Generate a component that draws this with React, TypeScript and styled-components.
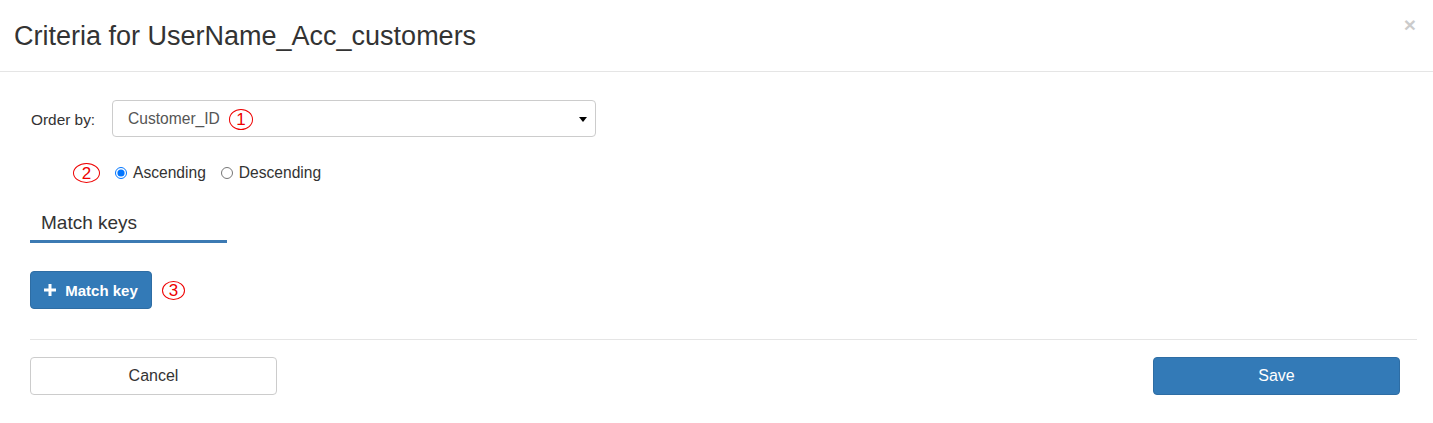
import React from "react";
import styled, { createGlobalStyle } from "styled-components";

const Global = createGlobalStyle`
  html, body { margin: 0; padding: 0; background: #fff; }
  body { font-family: "Liberation Sans", Arial, sans-serif; color: #333; }
  * { box-sizing: border-box; }
`;

const Modal = styled.div`
  width: 1433px;
  height: 423px;
  background: #fff;
  display: flex;
  flex-direction: column;
`;

const Header = styled.div`
  height: 72px;
  border-bottom: 1px solid #e5e5e5;
  display: flex;
  align-items: flex-start;
  justify-content: space-between;
  padding: 0 17px 0 14px;
`;

const Title = styled.h4`
  margin: 0;
  padding-top: 20px;
  font-size: 27px;
  line-height: 32px;
  font-weight: normal;
  color: #333;
`;

const Close = styled.button`
  border: 0;
  background: none;
  padding: 0;
  margin-top: 13px;
  font-family: "Liberation Sans", Arial, sans-serif;
  font-size: 21px;
  font-weight: bold;
  line-height: 24px;
  color: #000;
  opacity: 0.2;
`;

const Body = styled.div`
  padding: 28px 16px 0 30px;
  display: flex;
  flex-direction: column;
`;

const FieldRow = styled.div`
  display: flex;
  align-items: center;
  height: 37px;
`;

const Label = styled.label`
  width: 82px;
  padding-left: 1px;
  padding-top: 2px;
  font-size: 15.4px;
  color: #333;
`;

const Select = styled.div`
  width: 484px;
  height: 37px;
  border: 1px solid #ccc;
  border-radius: 4px;
  display: flex;
  align-items: center;
  padding: 1px 8px 0 15px;
  font-size: 15.6px;
  color: #555;
`;

const SelectText = styled.span`
  flex: 1;
  display: flex;
  align-items: center;
  gap: 9px;
`;

const Caret = styled.span`
  width: 0;
  height: 0;
  border-left: 4px solid transparent;
  border-right: 4px solid transparent;
  border-top: 5px solid #000;
`;

const Badge = styled.span<{ $w: number; $h: number }>`
  display: inline-flex;
  align-items: center;
  justify-content: center;
  width: ${(p) => p.$w}px;
  height: ${(p) => p.$h}px;
  border: 1.5px solid #e00;
  border-radius: 50%;
  color: #e00;
  font-size: 17px;
  line-height: 1;
  flex: none;
`;

const RadioRow = styled.div`
  display: flex;
  align-items: center;
  margin-top: 26px;
  margin-left: 43px;
  height: 20px;
  font-size: 15.6px;
`;

const RadioLabel = styled.label`
  display: inline-flex;
  align-items: center;
  margin-left: 15px;
  color: #333;
  input {
    margin: 0 6px 0 0;
    width: 12px;
    height: 12px;
  }
  & + & {
    margin-left: 15px;
  }
`;

const Tab = styled.div`
  margin-top: 29px;
  width: 197px;
  padding: 0 0 6px 11px;
  border-bottom: 3px solid #3c7ab3;
  font-size: 19px;
  line-height: 22px;
  color: #333;
`;

const ActionRow = styled.div`
  display: flex;
  align-items: center;
  gap: 10px;
  margin-top: 28px;
`;

const PrimaryButton = styled.button<{ $w: number }>`
  width: ${(p) => p.$w}px;
  height: 38px;
  background: #337ab7;
  border: 1px solid #2e6da4;
  border-radius: 4px;
  color: #fff;
  font-family: "Liberation Sans", Arial, sans-serif;
  font-size: 15px;
  display: inline-flex;
  align-items: center;
  justify-content: center;
  gap: 9px;
  padding: 0;
`;

const BoldText = styled.span`
  font-weight: bold;
`;

const PlainText = styled.span`
  font-size: 16px;
`;

const DefaultButton = styled.button`
  width: 247px;
  height: 38px;
  background: #fff;
  border: 1px solid #ccc;
  border-radius: 4px;
  color: #333;
  font-family: "Liberation Sans", Arial, sans-serif;
  font-size: 16px;
  padding: 0;
`;

const Divider = styled.div`
  margin-top: 30px;
  border-top: 1px solid #e5e5e5;
`;

const Footer = styled.div`
  display: flex;
  justify-content: space-between;
  margin-top: 17px;
  padding-right: 17px;
`;

const Plus = () => (
  <svg width="12" height="12" viewBox="0 0 12 12">
    <path d="M4.5 0h3v4.5H12v3H7.5V12h-3V7.5H0v-3h4.5z" fill="#fff" />
  </svg>
);

export default function App() {
  return (
    <>
      <Global />
      <Modal>
        <Header>
          <Title>Criteria for UserName_Acc_customers</Title>
          <Close aria-label="Close">×</Close>
        </Header>
        <Body>
          <FieldRow>
            <Label>Order by:</Label>
            <Select>
              <SelectText>
                Customer_ID
                <Badge $w={24} $h={21}>1</Badge>
              </SelectText>
              <Caret />
            </Select>
          </FieldRow>
          <RadioRow>
            <Badge $w={27} $h={20}>2</Badge>
            <RadioLabel>
              <input type="radio" name="order" defaultChecked />
              Ascending
            </RadioLabel>
            <RadioLabel>
              <input type="radio" name="order" />
              Descending
            </RadioLabel>
          </RadioRow>
          <Tab>Match keys</Tab>
          <ActionRow>
            <PrimaryButton $w={122}>
              <Plus />
              <BoldText>Match key</BoldText>
            </PrimaryButton>
            <Badge $w={23} $h={19}>3</Badge>
          </ActionRow>
          <Divider />
          <Footer>
            <DefaultButton>Cancel</DefaultButton>
            <PrimaryButton $w={247}>
              <PlainText>Save</PlainText>
            </PrimaryButton>
          </Footer>
        </Body>
      </Modal>
    </>
  );
}
